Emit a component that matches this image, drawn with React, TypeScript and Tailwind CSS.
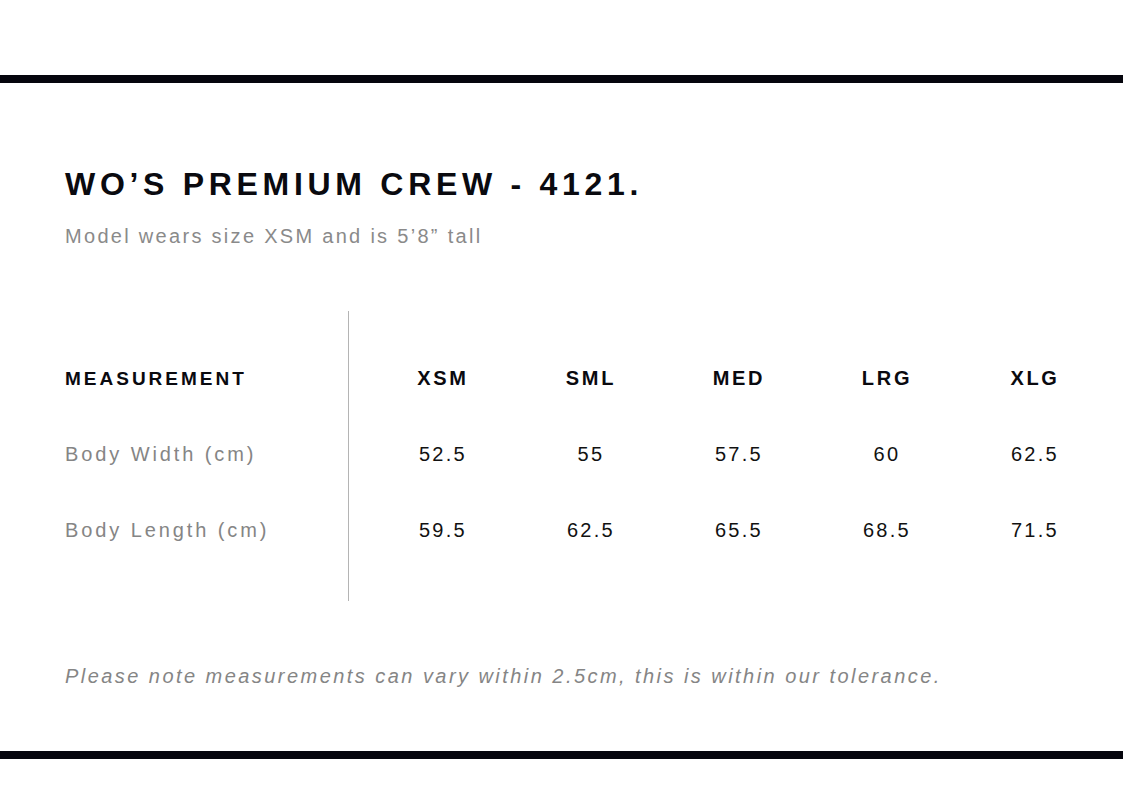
import React from 'react';

const sizes = ['XSM', 'SML', 'MED', 'LRG', 'XLG'];

const rows = [
  { label: 'Body Width (cm)', values: ['52.5', '55', '57.5', '60', '62.5'] },
  { label: 'Body Length (cm)', values: ['59.5', '62.5', '65.5', '68.5', '71.5'] },
];

export default function App() {
  return (
    <div className="w-full min-h-[794px] bg-white pt-[75px] font-['Liberation_Sans',Arial,sans-serif]">
      <div className="h-2 bg-[#05050d]" />

      <div className="px-[65px]">
        {/* Heading */}
        <h1 className="mt-[85px] text-[32px] leading-none font-bold tracking-[4.7px] text-[#0a0a0f] whitespace-nowrap">
          WO’S PREMIUM CREW - 4121.
        </h1>
        <p className="mt-[26px] text-[20px] leading-none tracking-[2.3px] text-[#8a8a8a] whitespace-nowrap">
          Model wears size XSM and is 5’8” tall
        </p>

        {/* Size table */}
        <div className="mt-[65px] flex">
          <div className="w-[283px] shrink-0 flex flex-col pt-[29px] pb-[33px]">
            <div className="h-[76px] flex items-center text-[19px] leading-none font-bold tracking-[3px] text-[#0a0a0f]">
              MEASUREMENT
            </div>
            {rows.map((r) => (
              <div
                key={r.label}
                className="h-[76px] flex items-center text-[20px] leading-none tracking-[2.9px] text-[#858585]"
              >
                {r.label}
              </div>
            ))}
          </div>

          <div className="w-px shrink-0 bg-[#b4b4b4]" />

          <div className="ml-[20px] shrink-0 pt-[29px] pb-[33px] grid grid-cols-[repeat(5,148px)] auto-rows-[76px]">
            {sizes.map((s) => (
              <div
                key={s}
                className="flex items-center justify-center text-[20px] leading-none font-bold tracking-[2.7px] text-[#0a0a0f]"
              >
                {s}
              </div>
            ))}
            {rows.map((r) =>
              r.values.map((v, i) => (
                <div
                  key={r.label + i}
                  className="flex items-center justify-center text-[20px] leading-none tracking-[2.3px] text-[#111]"
                >
                  {v}
                </div>
              ))
            )}
          </div>
        </div>

        {/* Note */}
        <p className="mt-[65px] text-[20px] leading-none italic tracking-[2.45px] text-[#858585] whitespace-nowrap">
          Please note measurements can vary within 2.5cm, this is within our tolerance.
        </p>
      </div>

      <div className="mt-[65px] h-2 bg-[#05050d]" />
    </div>
  );
}
